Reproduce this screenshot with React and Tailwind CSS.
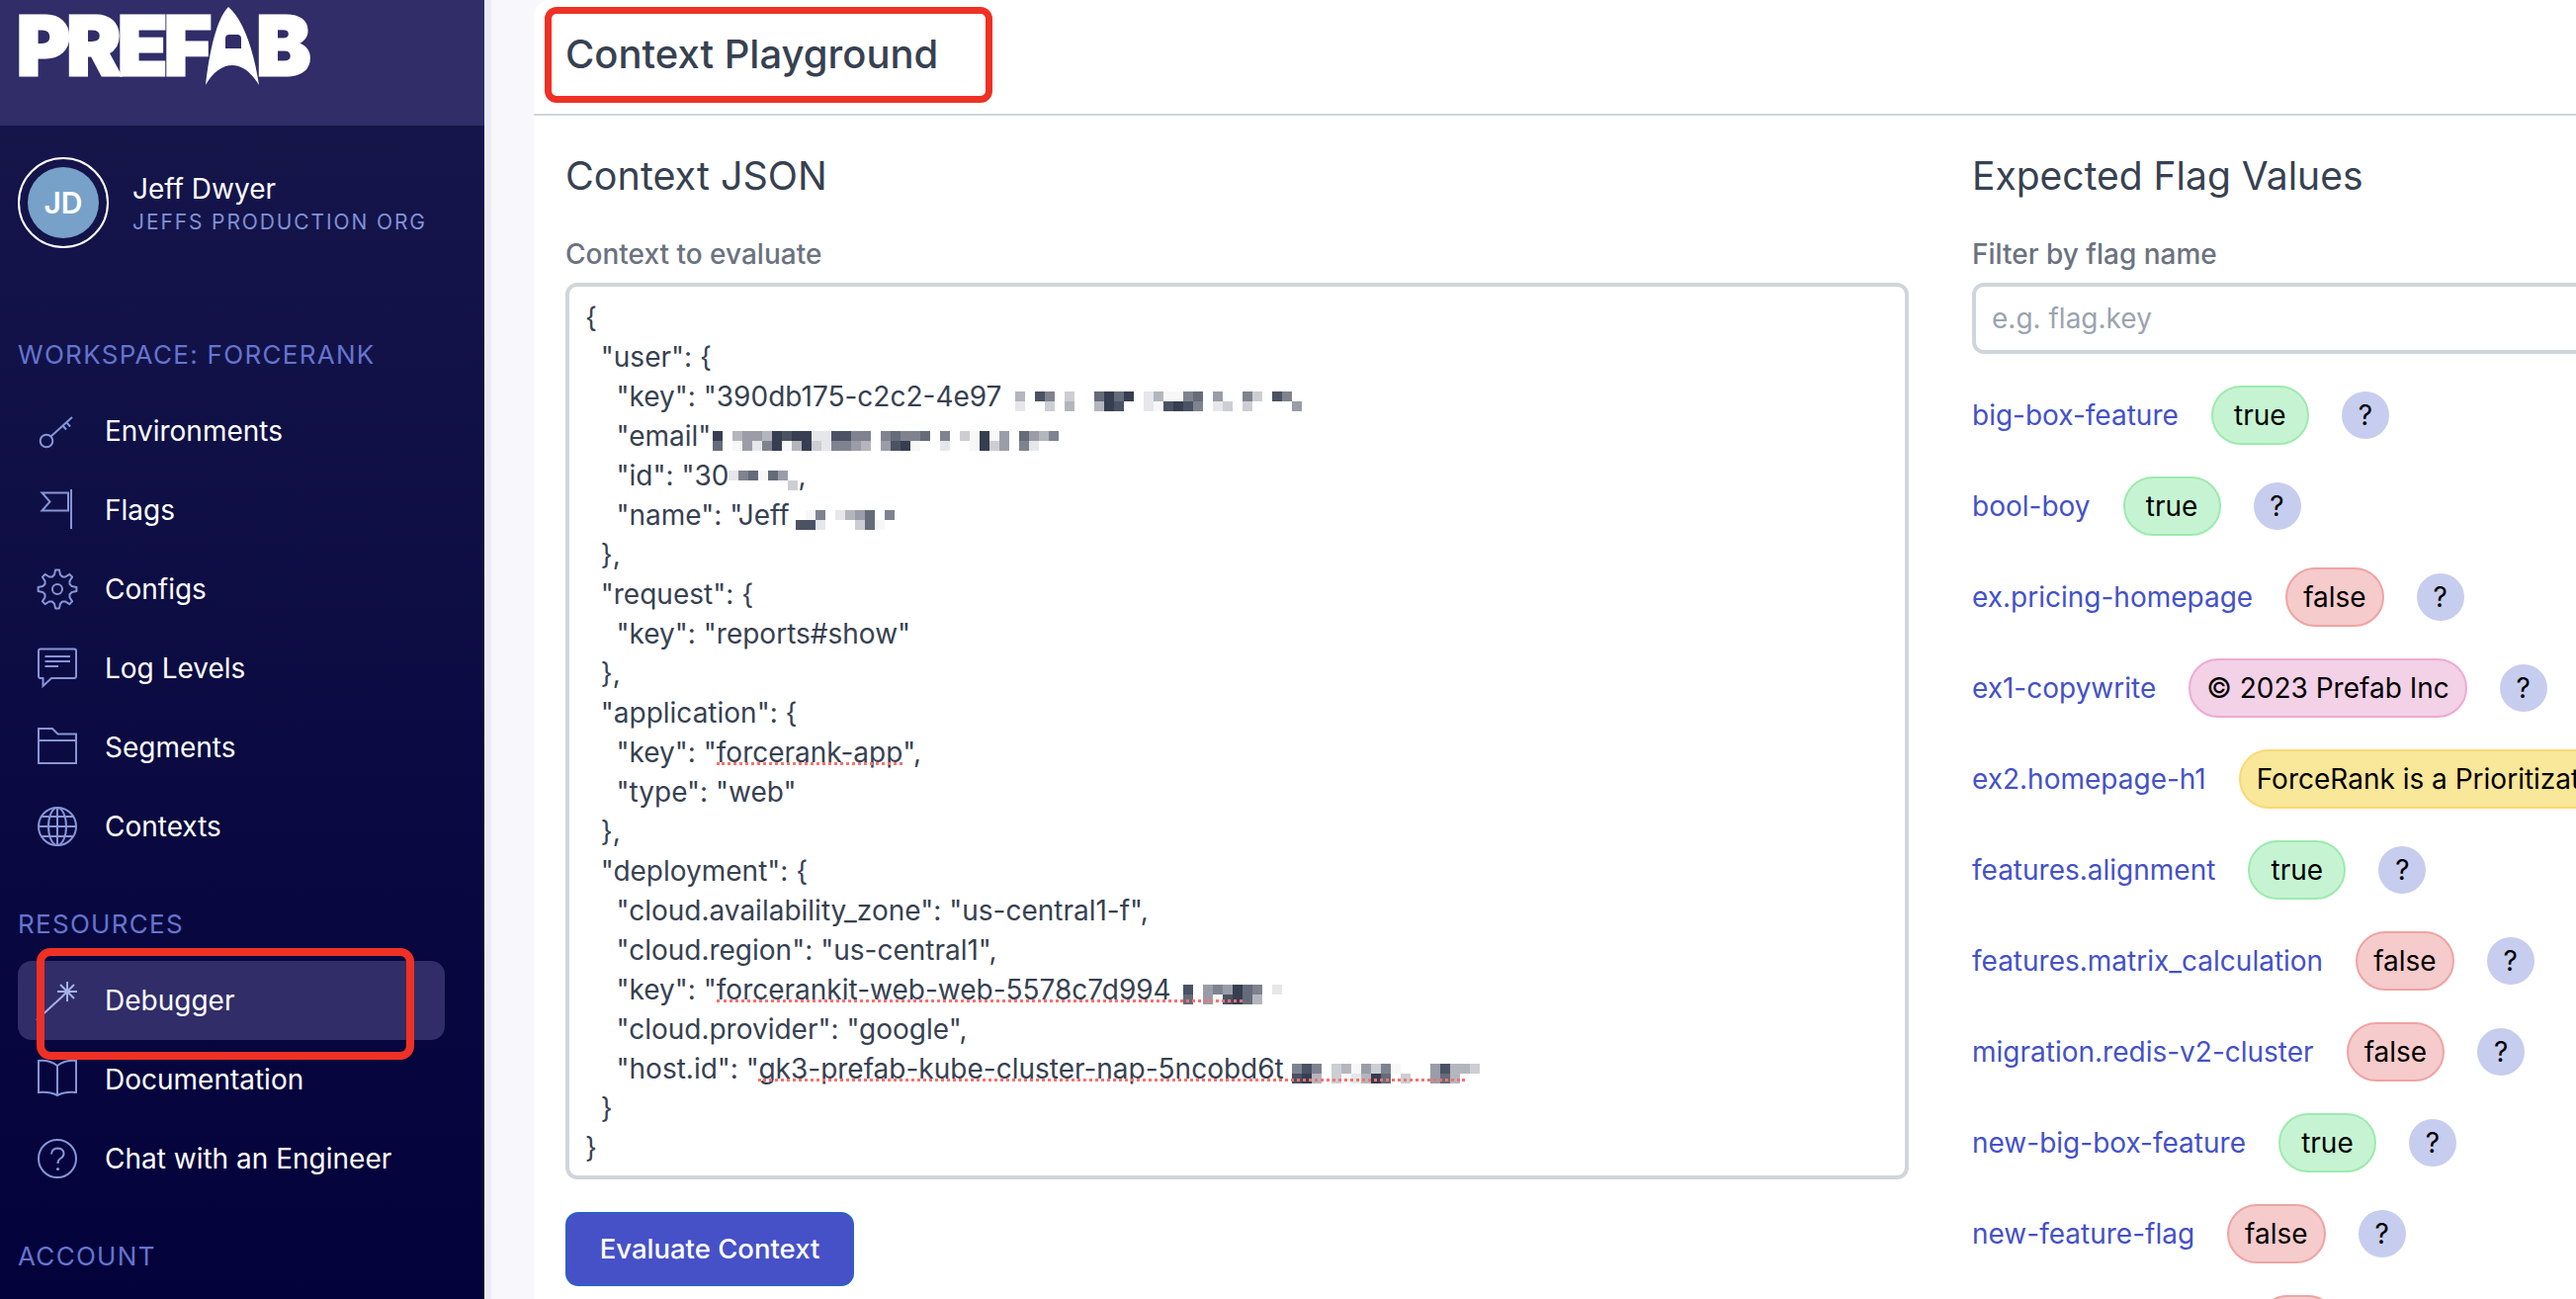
import React from "react";

const SHADES = {
  a: "#373e52",
  b: "#4b5264",
  c: "#666b7a",
  d: "#7f8390",
  e: "#9a9da8",
  f: "#b4b6bd",
  g: "#ccced4",
  h: "#e6e7ea",
  i: "#f7f7f8",
};

// pixelated redaction from the original screenshot, 10px cells
const Mosaic = ({ rows, className }) => (
  <svg
    width={rows[0].length * 10}
    height={20}
    viewBox={`0 0 ${rows[0].length * 10} 20`}
    className={`inline-block align-[-5px] ${className || ""}`}
  >
    {rows.map((row, y) =>
      row.split("").map((c, x) =>
        c === " " ? null : (
          <rect key={`${x}-${y}`} x={x * 10} y={y * 10} width="10" height="10" fill={SHADES[c]} />
        )
      )
    )}
  </svg>
);

const Squiggle = ({ children, right = "right-0" }) => (
  <span className="relative">
    {children}
    <span className={`absolute left-0 ${right} top-[27px] border-t-[3px] border-dotted border-[#f8716f]`} />
  </span>
);

const gearPoints = () => {
  const pts = [];
  for (let i = 0; i < 8; i++) {
    const a = (i * Math.PI) / 4 - Math.PI / 2;
    [
      [-0.39, 13.5],
      [-0.2, 15],
      [-0.1, 19.5],
      [0.1, 19.5],
      [0.2, 15],
    ].forEach(([d, r]) => {
      pts.push(`${(20 + r * Math.cos(a + d)).toFixed(2)},${(20 + r * Math.sin(a + d)).toFixed(2)}`);
    });
  }
  return pts.join(" ");
};

const Icon = ({ children }) => (
  <svg
    width="40"
    height="40"
    viewBox="0 0 40 40"
    fill="none"
    stroke="#8795d6"
    strokeWidth="2"
    className="shrink-0 overflow-visible"
  >
    {children}
  </svg>
);

const KeyIcon = () => (
  <Icon>
    <circle cx="9" cy="30" r="6.3" />
    <path d="M13.5 25.5L35 6M29 11l4 4.5M25.5 14.5l3.5 4" />
  </Icon>
);
const FlagIcon = () => (
  <Icon>
    <path d="M34 -1V39M31 2.5H4.5L12.5 11.5L4.5 20.5H31V2.5Z" />
  </Icon>
);
const GearIcon = () => (
  <Icon>
    <polygon points={gearPoints()} strokeLinejoin="round" />
    <circle cx="20" cy="20" r="5" />
  </Icon>
);
const ChatIcon = () => (
  <Icon>
    <path d="M3 0.5H37Q39 0.5 39 2.5V28Q39 30 37 30H14L5.5 38V30H3Q1 30 1 28V2.5Q1 0.5 3 0.5Z" />
    <path d="M7.5 8H33M7.5 13H33M7.5 18H21" />
  </Icon>
);
const FolderIcon = () => (
  <Icon>
    <path d="M1 1H15L20.5 6.5H39V36H1V1Z" />
    <path d="M1 13H39" />
  </Icon>
);
const GlobeIcon = () => (
  <Icon>
    <circle cx="20" cy="20" r="19" />
    <ellipse cx="20" cy="20" rx="9" ry="19" />
    <path d="M20 1V39M1 20H39M4 10H36M4 30H36" />
  </Icon>
);
const WandIcon = () => (
  <svg width="40" height="40" viewBox="0 0 40 40" fill="none" stroke="#a7b2e6" strokeWidth="2" className="shrink-0 overflow-visible">
    <path d="M25 16L-1 40M30 1V21M20 11H40M23 4L37 18M37 4L23 18" />
  </svg>
);
const BookIcon = () => (
  <Icon>
    <path d="M20 6Q12 0 1 1V33Q12 32 20 36Q28 32 39 33V1Q28 0 20 6ZM20 6V36" />
  </Icon>
);
const HelpIcon = () => (
  <Icon>
    <circle cx="20" cy="20" r="19" />
    <path d="M14 15.5Q14.5 9.5 20.5 9.5Q26.5 10 26.5 15Q26.5 18 23 20Q20.5 21.5 20.5 25" />
    <circle cx="20.5" cy="30.5" r="1.6" fill="#8795d6" stroke="none" />
  </Icon>
);

const SectionLabel = ({ children }) => (
  <div className="mt-[39px] mb-[17px] pl-[18px] h-[40px] leading-[40px] text-[26px] tracking-[0.05em] text-[#6674cf]">{children}</div>
);

const NavItem = ({ icon, label, active }) => (
  <div className={`ml-[18px] mr-[40px] h-[80px] flex items-center gap-[28px] pl-[20px] rounded-[14px] text-[28px] text-white ${active ? "bg-[#302d69]" : ""}`}>
    {icon}
    <span>{label}</span>
  </div>
);

const Sidebar = () => (
  <aside className="relative w-[490px] shrink-0 h-full flex flex-col bg-gradient-to-b from-[#17174c] to-[#04023a]">
    <div className="h-[127px] shrink-0 bg-[#302d69] flex items-start pl-[17px] pt-[7px] text-white">
      <span className="text-[82px] leading-[79px] font-black tracking-[-0.04em] [-webkit-text-stroke:3px_white]">PREF</span>
      <svg width="54" height="79" viewBox="0 0 54 79" className="shrink-0 -ml-[3px]">
        <path
          fillRule="evenodd"
          fill="#fff"
          d="M0 79C4 45 11 12 23 0C38 12 49 45 54 79C46 66 37 59 27 59C17 59 7 66 0 79ZM20 32Q20 28 24 28H32Q36 28 36 32V42H20Z"
        />
      </svg>
      <span className="text-[82px] leading-[79px] font-black -ml-[2px] [-webkit-text-stroke:3px_white]">B</span>
    </div>

    <div className="h-[156px] shrink-0 flex items-center gap-[24px] pl-[18px]">
      <div className="w-[92px] h-[92px] shrink-0 rounded-full border-2 border-white flex items-center justify-center">
        <div className="w-[72px] h-[72px] rounded-full bg-[#77a1c9] flex items-center justify-center text-white text-[30px] font-semibold">JD</div>
      </div>
      <div className="pt-[3px]">
        <div className="text-[28px] leading-[34px] text-white">Jeff Dwyer</div>
        <div className="mt-[2px] text-[21px] leading-[30px] tracking-[0.09em] text-[#8290d8]">JEFFS PRODUCTION ORG</div>
      </div>
    </div>

    <div className="mt-[17px]">
      <SectionLabel>WORKSPACE: FORCERANK</SectionLabel>
      <NavItem icon={<KeyIcon />} label="Environments" />
      <NavItem icon={<FlagIcon />} label="Flags" />
      <NavItem icon={<GearIcon />} label="Configs" />
      <NavItem icon={<ChatIcon />} label="Log Levels" />
      <NavItem icon={<FolderIcon />} label="Segments" />
      <NavItem icon={<GlobeIcon />} label="Contexts" />
      <SectionLabel>RESOURCES</SectionLabel>
      <NavItem icon={<WandIcon />} label="Debugger" active />
      <NavItem icon={<BookIcon />} label="Documentation" />
      <NavItem icon={<HelpIcon />} label="Chat with an Engineer" />
      <SectionLabel>ACCOUNT</SectionLabel>
    </div>

    {/* annotation drawn on the screenshot */}
    <div className="absolute left-[37px] top-[959px] w-[382px] h-[113px] border-[8px] border-[#ee3124] rounded-[14px]" />
  </aside>
);

const CODE_LINES = [
  "{",
  '  "user": {',
  <>
    {'    "key": "390db175-c2c2-4e97'}
    <Mosaic className="ml-[14px]" rows={["f bd g  caca hfiidc e  dg bd ", "h  g f  fab  hibabd hg g    e"]} />
  </>,
  <>
    {'    "email"'}
    <Mosaic className="ml-[2px]" rows={["a feefabaahhbbdd dcddc d giaie cefd", "c iehdaifaghddef ebai  h  iage dh  "]} />
  </>,
  <>
    {'    "id": "30'}
    <Mosaic rows={["hdcice ", "      g"]} />,
  </>,
  <>
    {'    "name": "Jeff'}
    <Mosaic className="ml-[6px]" rows={[" id hfec d", "bbh   gci "]} />
  </>,
  "  },",
  '  "request": {',
  '    "key": "reports#show"',
  "  },",
  '  "application": {',
  <>
    {'    "key": "'}
    <Squiggle>forcerank-app</Squiggle>
    {'",'}
  </>,
  '    "type": "web"',
  "  },",
  '  "deployment": {',
  '    "cloud.availability_zone": "us-central1-f",',
  '    "cloud.region": "us-central1",',
  <>
    {'    "key": "'}
    <Squiggle right="right-[40px]">
      forcerankit-web-web-5578c7d994
      <Mosaic className="ml-[12px]" rows={["b edeacd h", "c eibacf  "]} />
    </Squiggle>
  </>,
  '    "cloud.provider": "google",',
  <>
    {'    "host.id": "'}
    <Squiggle right="right-[15px]">
      gk3-prefab-kube-cluster-nap-5ncobd6t
      <Mosaic className="ml-[8px]" rows={["dbd gfiegdi   ebffg", "baf gihfac g  ecf  "]} />
    </Squiggle>
  </>,
  "  }",
  "}",
];

const TONES = {
  green: "bg-[#c6f4d3] border-[#9eeaae]",
  red: "bg-[#f5cbcb] border-[#f0a3a3]",
  pink: "bg-[#f3d1e7] border-[#edaad2]",
  yellow: "bg-[#f9e79a] border-[#f9d976]",
};

const FLAGS = [
  ["big-box-feature", "true", "green"],
  ["bool-boy", "true", "green"],
  ["ex.pricing-homepage", "false", "red"],
  ["ex1-copywrite", "© 2023 Prefab Inc", "pink"],
  ["ex2.homepage-h1", "ForceRank is a Prioritization Tool", "yellow"],
  ["features.alignment", "true", "green"],
  ["features.matrix_calculation", "false", "red"],
  ["migration.redis-v2-cluster", "false", "red"],
  ["new-big-box-feature", "true", "green"],
  ["new-feature-flag", "false", "red"],
];

const FlagRow = ({ name, value, tone }) => (
  <div className="flex items-center gap-[33px] h-[60px] whitespace-nowrap">
    <a className="shrink-0 text-[28px] text-[#4451c8]">{name}</a>
    <span className={`shrink-0 h-[60px] min-w-[99px] flex items-center justify-center px-[16px] rounded-[30px] border-2 text-[28px] text-black ${TONES[tone]}`}>
      {value}
    </span>
    <span className="w-[48px] h-[48px] shrink-0 rounded-full bg-[#c7cdee] flex items-center justify-center text-[28px] text-black">?</span>
  </div>
);

export default function App() {
  return (
    <div className="w-full h-screen overflow-hidden flex bg-[#f7f7fc] font-[Inter,sans-serif]">
      <Sidebar />
      <div className="w-[50px] shrink-0 border-l-[7px] border-[#ebebf5]" />
      <main className="relative flex-1 min-w-0 bg-white rounded-tl-[16px] text-[#374151]">
        <header className="h-[117px] border-b-2 border-[#d1d5db] pl-[32px] pt-[30px]">
          <h1 className="text-[40px] leading-[50px] font-medium">Context Playground</h1>
        </header>
        <div className="absolute left-[11px] top-[7px] w-[453px] h-[97px] border-[7px] border-[#ee3124] rounded-[12px]" />

        <div className="flex gap-[64px] pl-[32px]">
          <section className="w-[1359px] shrink-0">
            <h2 className="mt-[37px] text-[39.5px] leading-[48px]">Context JSON</h2>
            <div className="mt-[39px] text-[28px] leading-[32px] font-medium text-[#6b7280]">Context to evaluate</div>
            <div className="mt-[13px] h-[907px] border-4 border-[#d1d5db] rounded-[12px] pt-[11px] pl-[16px] text-[28px] leading-[40px] whitespace-pre">
              {CODE_LINES.map((line, i) => (
                <div key={i} className="h-[40px]">{line}</div>
              ))}
            </div>
            <button className="mt-[33px] w-[292px] h-[75px] rounded-[13px] bg-[#4651c8] border-2 border-[#2b5fc7] text-white text-[27.5px] font-medium">
              Evaluate Context
            </button>
          </section>

          <section className="w-[900px] shrink-0">
            <h2 className="mt-[37px] text-[39px] leading-[48px]">Expected Flag Values</h2>
            <div className="mt-[39px] text-[28px] leading-[32px] font-medium text-[#6b7280]">Filter by flag name</div>
            <input
              placeholder="e.g. flag.key"
              className="mt-[13px] block w-full h-[72px] border-4 border-[#d1d5db] rounded-[12px] px-[16px] text-[28px] placeholder:text-[#9ca3af]"
            />
            <div className="mt-[32px] flex flex-col gap-[32px]">
              {FLAGS.map(([name, value, tone]) => (
                <FlagRow key={name} name={name} value={value} tone={tone} />
              ))}
              {/* next row is cut off by the window, only the pill top shows */}
              <div className="flex items-center gap-[33px] h-[60px]">
                <div className="w-[256px]" />
                <span className="h-[60px] w-[81px] rounded-[30px] border-2 bg-[#f5cbcb] border-[#f0a3a3]" />
              </div>
            </div>
          </section>
        </div>
      </main>
    </div>
  );
}
